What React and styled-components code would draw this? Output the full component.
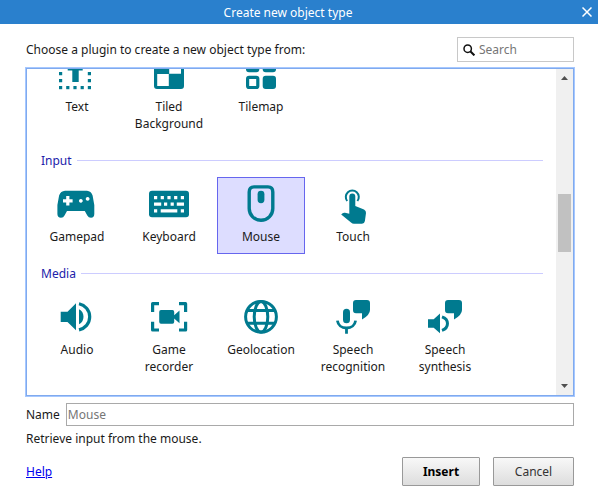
import React, { useState } from "react";
import styled, { createGlobalStyle } from "styled-components";

const teal = "#007a8f";

const GlobalStyle = createGlobalStyle`
  *, *::before, *::after { box-sizing: border-box; }
  body {
    margin: 0;
    background: #fff;
    color: #1a1a1a;
    font: 12px/17px "Noto Sans", "Open Sans", sans-serif;
  }
  button, input { font: inherit; color: inherit; }
`;

const Dialog = styled.section`
  display: flex;
  flex-direction: column;
  height: 100vh;
  background: #fff;
`;

const TitleBar = styled.header`
  display: grid;
  grid-template-columns: 1fr 22px;
  align-items: center;
  height: 24px;
  flex: none;
  background: #2a80cd;
  color: #fff;
`;

const Title = styled.h1`
  margin: 0;
  font-size: 12px;
  font-weight: 400;
  text-align: center;
`;

const CloseButton = styled.button`
  display: grid;
  place-items: center;
  height: 24px;
  padding: 0;
  border: 0;
  background: none;
  color: #fff;
`;

const Body = styled.form`
  display: flex;
  flex-direction: column;
  flex: 1;
  min-height: 0;
  padding: 13px 24px 11px 26px;
`;

const TopRow = styled.div`
  display: flex;
  align-items: center;
  justify-content: space-between;
  margin-bottom: 6px;
`;

const SearchBox = styled.label`
  display: flex;
  align-items: center;
  gap: 4px;
  width: 117px;
  height: 25px;
  padding: 0 5px;
  border: 1px solid #c8c8c8;
`;

const SearchInput = styled.input`
  flex: 1;
  min-width: 0;
  padding: 0;
  border: 0;
  outline: 0;
  background: none;
  &::placeholder { color: #767676; }
`;

const ListFrame = styled.div`
  display: flex;
  flex: 1;
  min-height: 0;
  border: 1px solid #80aaee;
  box-shadow: 0 0 0 1px #a6c8ff;
`;

const Viewport = styled.div`
  display: flex;
  flex-direction: column;
  justify-content: flex-end;
  flex: 1;
  overflow: hidden;
  padding: 0 13px 11px 6px;
`;

const Category = styled.section`
  flex: none;
`;

const CategoryTitle = styled.h2`
  display: flex;
  align-items: center;
  gap: 5px;
  margin: 11px 0 8px 8px;
  color: #2222aa;
  font-size: 12px;
  font-weight: 400;
  &::after {
    content: "";
    flex: 1;
    height: 1px;
    background: #ccccff;
  }
`;

const Items = styled.div`
  display: flex;
  gap: 4px;
`;

const Item = styled.button`
  display: flex;
  flex-direction: column;
  align-items: center;
  justify-content: flex-start;
  gap: 6px;
  width: 88px;
  padding: 8px 4px;
  align-self: flex-start;
  border: 1px solid ${(p) => (p.$selected ? "#6666ee" : "transparent")};
  background: ${(p) => (p.$selected ? "#ddddff" : "transparent")};
`;

const Icon = styled.svg`
  width: 36px;
  height: 36px;
  overflow: visible;
  fill: ${teal};
`;

const Scrollbar = styled.div`
  display: flex;
  flex-direction: column;
  align-items: center;
  width: 17px;
  background: #f0f0f0;
`;

const ScrollArrow = styled.svg`
  width: 17px;
  height: 17px;
  flex: none;
  fill: #505050;
`;

const Track = styled.div`
  display: grid;
  grid-template-rows: 108fr 58fr 126fr;
  flex: 1;
  width: 13px;
`;

const Thumb = styled.div`
  grid-row: 2;
  background: #c1c1c1;
`;

const NameRow = styled.div`
  display: flex;
  align-items: center;
  gap: 6px;
  margin: 7px 0 4px;
`;

const NameInput = styled.input`
  flex: 1;
  min-width: 0;
  height: 23px;
  padding: 0 1px;
  border: 1px solid #a9a9a9;
  outline: 0;
  &::placeholder { color: #767676; }
`;

const Description = styled.p`
  margin: 0 0 10px;
`;

const Footer = styled.footer`
  display: flex;
  align-items: center;
  gap: 13px;
`;

const HelpLink = styled.a`
  margin-right: auto;
  color: #0000ee;
`;

const Button = styled.button`
  min-width: ${(p) => (p.$primary ? 78 : 81)}px;
  height: 29px;
  padding: 0 12px;
  border: 1px solid #999;
  border-radius: 1px;
  background: linear-gradient(#f8f8f8, #dddddd);
  color: ${(p) => (p.$primary ? "#000" : "#333")};
  font-weight: ${(p) => (p.$primary ? 700 : 400)};
`;

const Bubble = () => (
  <path d="M21 1H32Q35 1 35 4V11Q35 16 27 20.5V14.3H21Q18 14.3 18 11V4Q18 1 21 1Z" />
);

const icons = {
  text: (
    <>
      <path d="M8.7 8H23.7V14.5H19.7V26H13.3V14.5H8.7Z" />
      {[0, 7.2, 14.4, 21.6, 28.8].map((x) => (
        <rect key={x} x={x} y="30" width="3.2" height="3.2" />
      ))}
      {[2, 9, 16, 23].map((y) => (
        <path key={y} d={`M0 ${y}h3.2v3.2h-3.2zM28.8 ${y}h3.2v3.2h-3.2z`} />
      ))}
    </>
  ),
  tiled: (
    <path
      fillRule="evenodd"
      d="M6 3H30Q33 3 33 6V30Q33 33 30 33H6Q3 33 3 30V6Q3 3 6 3ZM18.2 6V17.8H30V6ZM6.2 18V30H17.8V18Z"
    />
  ),
  tilemap: (
    <>
      <rect x="3" y="3" width="13.3" height="13.3" rx="3" />
      <rect x="19.7" y="3" width="13.3" height="13.3" rx="3" />
      <rect x="19.7" y="19.7" width="13.3" height="13.3" rx="3" />
      <rect x="4.6" y="21.3" width="10.2" height="10.2" rx="1.5" fill="none" stroke={teal} strokeWidth="3.2" />
    </>
  ),
  gamepad: (
    <path
      fillRule="evenodd"
      d="M6 4.7H28Q32 5 33.6 9.5L35.3 19V28Q35.3 31.7 32 31.7Q29.5 31.7 28.3 29.5L25.8 25H8L5.5 29.5Q4.5 31.7 2 31.7Q-1.6 31.7 -1.6 28V19L.1 9.5Q1.7 5 6 4.7ZM7.2 10V13.2H4V16.4H7.2V19.6H10.4V16.4H13.6V13.2H10.4V10ZM21.8 13a1.9 1.9 0 1 0 .1 0ZM28.6 11a1.9 1.9 0 1 0 .1 0Z"
    />
  ),
  keyboard: (
    <>
      <rect x="-2" y="4.7" width="40" height="26.6" rx="3" />
      <path
        fill="#fff"
        d="M3 10h3.2v3.2H3zM9.7 10h3.2v3.2H9.7zM16.4 10h3.2v3.2h-3.2zM23.1 10h3.2v3.2h-3.2zM29.8 10H33v3.2h-3.2zM3 16.5h7.2v3.2H3zM13 16.5h3.2v3.2H13zM19.6 16.5h3.2v3.2h-3.2zM25.8 16.5H33v3.2h-7.2zM3 23.2h3.2v3.2H3zM9.7 23.2h16.6v3.2H9.7zM29.8 23.2H33v3.2h-3.2z"
      />
    </>
  ),
  mouse: (
    <>
      <path
        d="M11 .9H25Q29.8 .9 29.8 6V22.5A11.8 11.8 0 0 1 6.2 22.5V6Q6.2 .9 11 .9Z"
        fill="none"
        stroke={teal}
        strokeWidth="3.4"
      />
      <rect x="14.6" y="4.8" width="6.8" height="12.4" rx="3.4" />
    </>
  ),
  touch: (
    <>
      <path d="M12.2 15A6.5 6.5 0 1 1 22.4 15" fill="none" stroke={teal} strokeWidth="2" />
      <path d="M14.3 10.5A3 3 0 0 1 20.3 10.5V20L29 23.5Q31.2 24.5 31 27L29.9 35Q29.5 37.7 27 37.7H19Q17.3 37.7 16 36.5L6.2 28.5L7.6 27.2Q8.5 26.5 10 26.8L14.3 27.8Z" />
    </>
  ),
  audio: (
    <>
      <path d="M1.7 12.7H8.5L17 4.3V31.3L8.5 23H1.7ZM20 10.3C26 13 26 22.6 20 25.3Z" />
      <path d="M20 4.7C26 6 30.7 11 30.7 17.8S26 29.5 20 30.9" fill="none" stroke={teal} strokeWidth="3.2" />
    </>
  ),
  recorder: (
    <>
      <path
        d="M1.6 13V4.7H8M28 4.7H34.6V13M34.6 22.7V31H28M8 31H1.6V22.7"
        fill="none"
        stroke={teal}
        strokeWidth="3.2"
        strokeLinejoin="round"
      />
      <path d="M10 11H21.5Q23.2 11 23.2 13V16.3L28.5 11.5V24.3L23.2 19.5V22.7Q23.2 24.7 21.5 24.7H10Q8.2 24.7 8.2 22.7V13Q8.2 11 10 11Z" />
    </>
  ),
  globe: (
    <g fill="none" stroke={teal} strokeWidth="3">
      <circle cx="18" cy="17.8" r="15.4" />
      <ellipse cx="18" cy="17.8" rx="6.8" ry="15.2" />
      <path d="M4.5 11.6H31.5M4.5 24.2H31.5" />
    </g>
  ),
  recognition: (
    <>
      <Bubble />
      <rect x="8" y="9.7" width="7" height="14.6" rx="3.5" />
      <path d="M2.4 21.6C3 26 6.5 29 11.5 29S20 26 20.6 21.6M11.5 29V34.7" fill="none" stroke={teal} strokeWidth="2.8" />
    </>
  ),
  synthesis: (
    <>
      <Bubble />
      <path d="M1 20.2H6.7L13 14.5V34.3L6.7 28.7H1Z" />
      <path d="M15 17.8C22.3 20.2 22.3 28.9 15 31.4" fill="none" stroke={teal} strokeWidth="3" />
    </>
  ),
};

const categories = [
  {
    id: "general",
    items: [
      ["Text", "text"],
      ["Tiled Background", "tiled"],
      ["Tilemap", "tilemap"],
    ],
  },
  {
    id: "input",
    title: "Input",
    items: [
      ["Gamepad", "gamepad"],
      ["Keyboard", "keyboard"],
      ["Mouse", "mouse"],
      ["Touch", "touch"],
    ],
  },
  {
    id: "media",
    title: "Media",
    items: [
      ["Audio", "audio"],
      ["Game recorder", "recorder"],
      ["Geolocation", "globe"],
      ["Speech recognition", "recognition"],
      ["Speech synthesis", "synthesis"],
    ],
  },
];

export default function App() {
  const [selected, setSelected] = useState("Mouse");

  return (
    <>
      <GlobalStyle />
      <Dialog role="dialog" aria-labelledby="dialog-title">
        <TitleBar>
          <Title id="dialog-title">Create new object type</Title>
          <CloseButton type="button" aria-label="Close">
            <svg width="10" height="10" viewBox="0 0 10 10" stroke="currentColor" strokeWidth="1.5">
              <path d="M.5 .5L9.5 9.5M9.5 .5L.5 9.5" />
            </svg>
          </CloseButton>
        </TitleBar>
        <Body onSubmit={(e) => e.preventDefault()}>
          <TopRow>
            <span>Choose a plugin to create a new object type from:</span>
            <SearchBox>
              <svg width="12" height="12" viewBox="0 0 12 12" fill="none" stroke="#111" aria-hidden="true">
                <circle cx="4.7" cy="4.7" r="3.7" strokeWidth="1.5" />
                <path d="M7.3 7.3L11.4 11.4" strokeWidth="2" />
              </svg>
              <SearchInput type="text" placeholder="Search" aria-label="Search" />
            </SearchBox>
          </TopRow>
          <ListFrame>
            <Viewport>
              {categories.map(({ id, title, items }) => (
                <Category key={id}>
                  {title && <CategoryTitle>{title}</CategoryTitle>}
                  <Items>
                    {items.map(([label, icon]) => (
                      <Item
                        key={label}
                        type="button"
                        $selected={label === selected}
                        aria-pressed={label === selected}
                        onClick={() => setSelected(label)}
                      >
                        <Icon viewBox="0 0 36 36" aria-hidden="true">{icons[icon]}</Icon>
                        <span>{label}</span>
                      </Item>
                    ))}
                  </Items>
                </Category>
              ))}
            </Viewport>
            <Scrollbar aria-hidden="true">
              <ScrollArrow viewBox="0 0 17 17"><path d="M5 11L8.5 7L12 11Z" /></ScrollArrow>
              <Track><Thumb /></Track>
              <ScrollArrow viewBox="0 0 17 17"><path d="M5 6L8.5 10L12 6Z" /></ScrollArrow>
            </Scrollbar>
          </ListFrame>
          <NameRow>
            <label htmlFor="object-name">Name</label>
            <NameInput id="object-name" type="text" placeholder={selected} />
          </NameRow>
          <Description>Retrieve input from the mouse.</Description>
          <Footer>
            <HelpLink href="#help">Help</HelpLink>
            <Button type="submit" $primary>Insert</Button>
            <Button type="button">Cancel</Button>
          </Footer>
        </Body>
      </Dialog>
    </>
  );
}
